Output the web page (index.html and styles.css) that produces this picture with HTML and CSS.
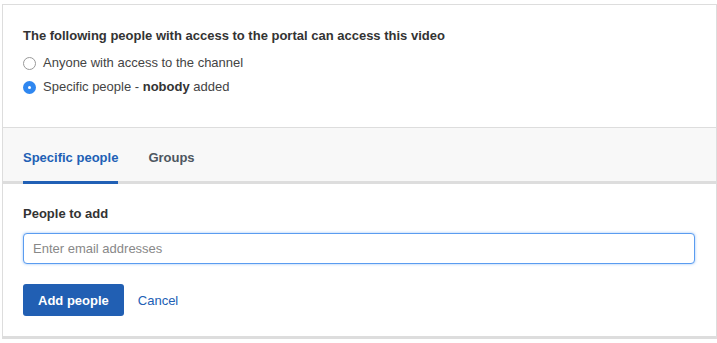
FILE: index.html
```html
<!DOCTYPE html>
<html lang="en">
<head>
    <meta charset="UTF-8">
    <meta name="viewport" content="width=device-width, initial-scale=1.0">
    <title>Video access</title>
    <link rel="stylesheet" href="styles.css">
</head>
<body>
    <div class="panel">
        <div class="access">
            <h3>The following people with access to the portal can access this video</h3>
            <label class="radio">
                <span class="dot"></span>
                <span>Anyone with access to the channel</span>
            </label>
            <label class="radio">
                <span class="dot checked"></span>
                <span>Specific people - <strong>nobody</strong> added</span>
            </label>
        </div>

        <div class="tabs">
            <div class="tab active">Specific people</div>
            <div class="tab">Groups</div>
        </div>

        <div class="add-form">
            <div class="field-label">People to add</div>
            <input type="text" class="email-input" placeholder="Enter email addresses">
            <div class="actions">
                <button class="btn-primary">Add people</button>
                <a href="#" class="cancel">Cancel</a>
            </div>
        </div>
    </div>
</body>
</html>
```

FILE: styles.css
```css
body {
    font-family: "Liberation Sans", Arial, sans-serif;
    font-size: 13px;
    color: #333;
    margin: 0;
    padding: 4px 0 0 2px;
    background-color: white;
}
.panel {
    width: 713px;
    border: 1px solid #ddd;
    border-bottom: 3px solid #ddd;
}
.access {
    padding: 22px 20px 28px;
    border-bottom: 1px solid #ddd;
}
.access h3 {
    font-size: 13px;
    font-weight: bold;
    margin: 0 0 6px;
    line-height: 18px;
}
.radio {
    display: flex;
    align-items: center;
    gap: 7px;
    line-height: 24px;
    color: #444;
}
.dot {
    width: 11px;
    height: 11px;
    border: 1px solid #999;
    border-radius: 50%;
    background: white;
}
.dot.checked {
    width: 13px;
    height: 13px;
    border: none;
    background: #2f87f0;
    position: relative;
}
.dot.checked::after {
    content: "";
    position: absolute;
    left: 5px;
    top: 5px;
    width: 3px;
    height: 3px;
    border-radius: 50%;
    background: white;
}
.radio strong {
    color: #333;
}
.tabs {
    display: flex;
    gap: 30px;
    padding: 0 20px;
    background: #f8f8f8;
    border-bottom: 3px solid #ddd;
    height: 53px;
}
.tab {
    font-weight: bold;
    color: #4d5660;
    box-sizing: border-box;
    height: 56px;
    padding-top: 5px;
    display: flex;
    align-items: center;
    border-bottom: 3px solid transparent;
}
.tab.active {
    color: #2160b5;
    border-bottom-color: #2160b5;
}
.add-form {
    padding: 21px 21px 20px 20px;
}
.field-label {
    font-weight: bold;
    line-height: 18px;
    margin-bottom: 10px;
}
.email-input {
    display: block;
    box-sizing: border-box;
    width: 100%;
    height: 31px;
    padding: 0 9px;
    font-family: inherit;
    font-size: 13px;
    border: 1px solid #5a9cf0;
    border-radius: 4px;
    box-shadow: 0 0 3px rgba(90, 156, 240, 0.6);
    outline: none;
}
.email-input::placeholder {
    color: #888;
}
.actions {
    display: flex;
    align-items: center;
    gap: 14px;
    margin-top: 20px;
}
.btn-primary {
    background-color: #215fb3;
    color: white;
    font-family: inherit;
    font-size: 13px;
    font-weight: bold;
    border: none;
    border-radius: 3px;
    height: 32px;
    padding: 0 15px;
    cursor: pointer;
}
.cancel {
    color: #2160b5;
    text-decoration: none;
}
```
